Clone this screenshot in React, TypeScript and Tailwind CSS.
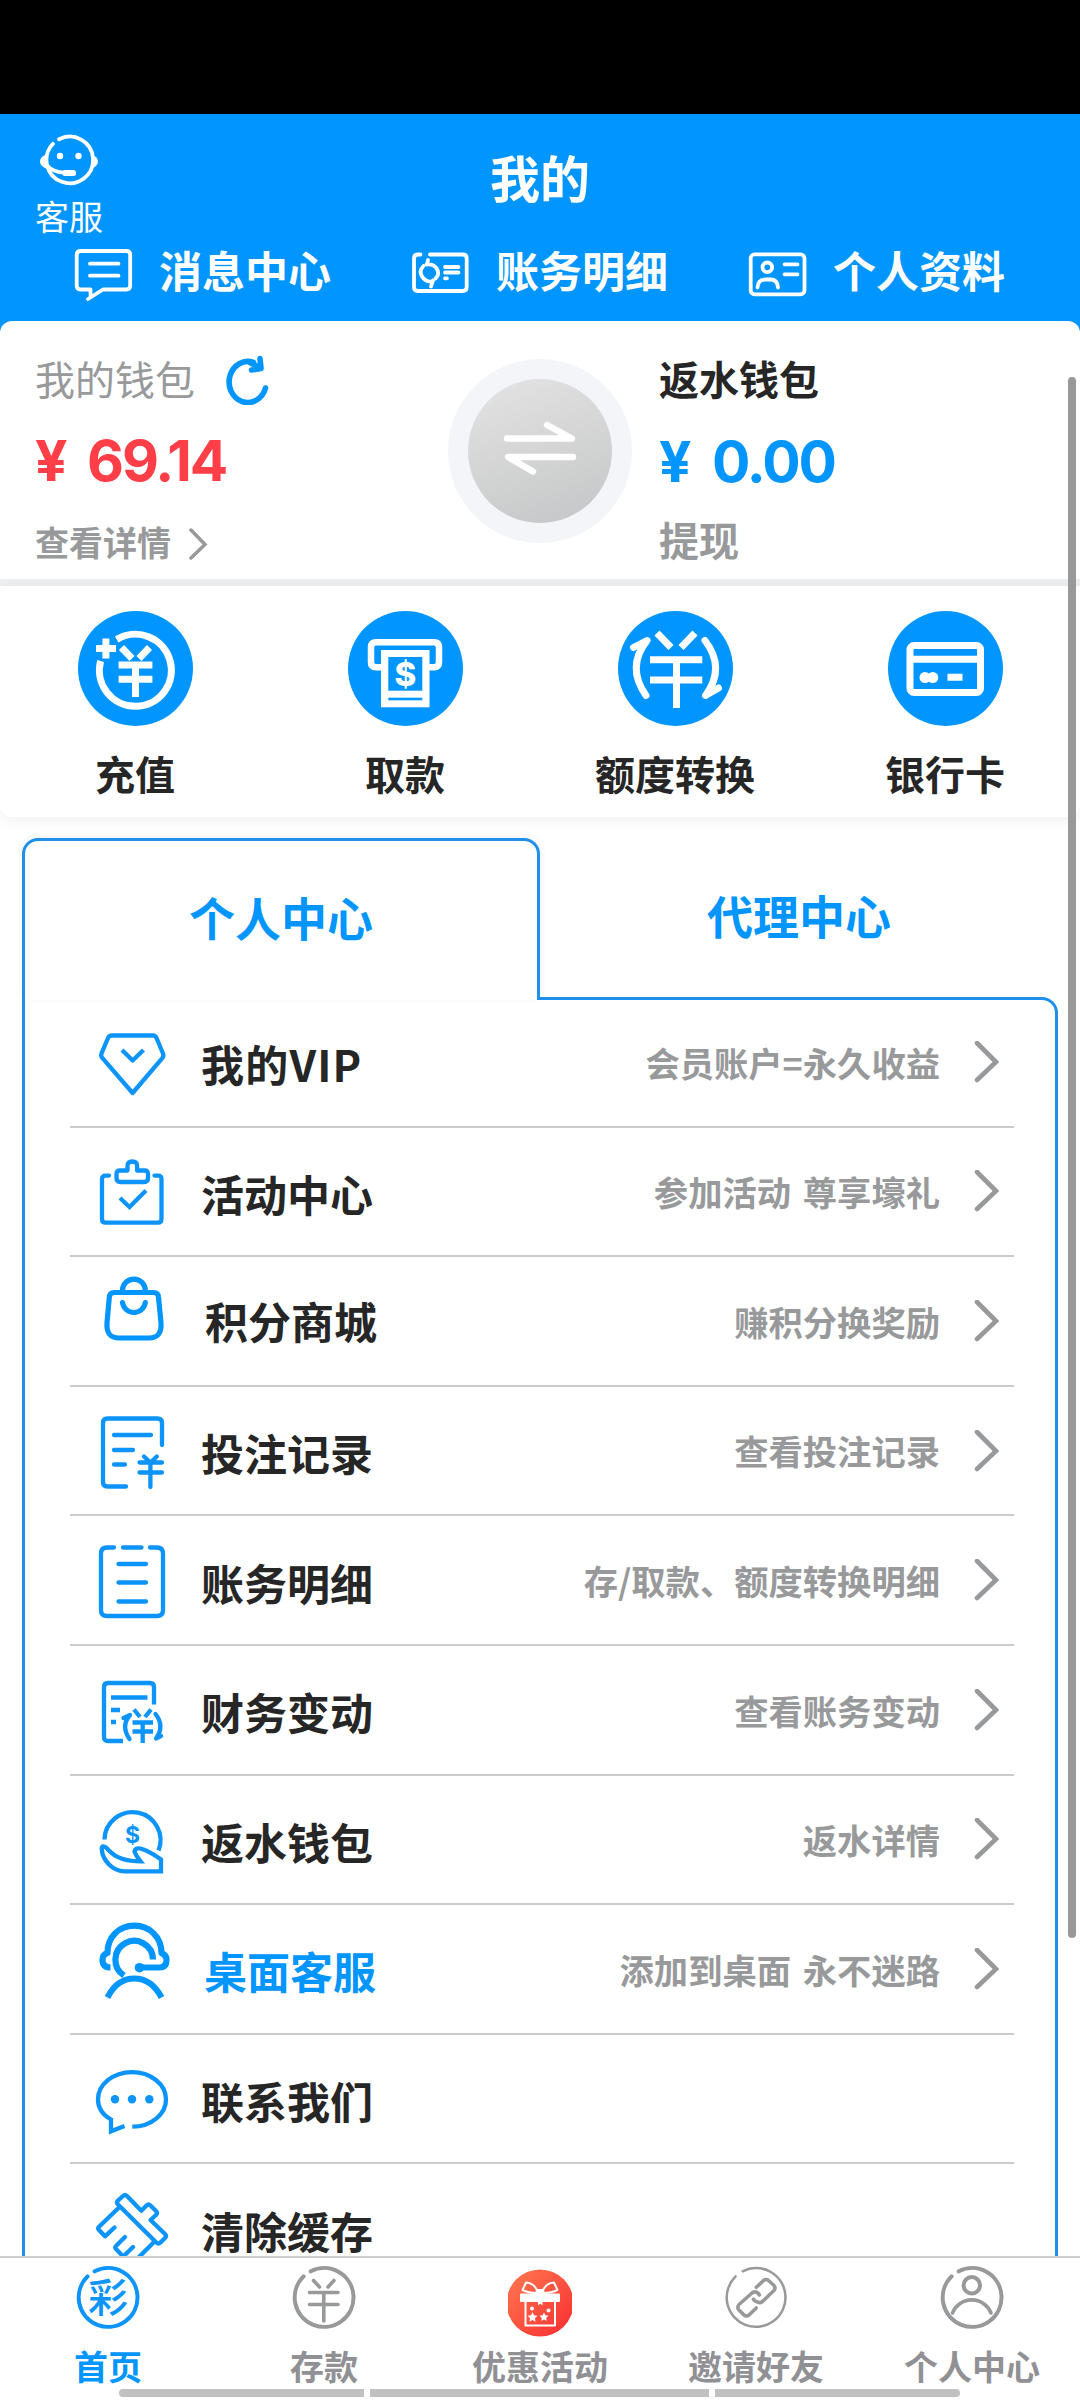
import type { ReactNode } from 'react';

const BLUE = '#0095ff';
const GRAY = '#98999b';

type IconProps = { children: ReactNode; color?: string; width?: number };

// Иконки меню — общий холст 80x100
function MenuIcon({ children, color = '#0d94fb', width = 4.3 }: IconProps) {
  return (
    <svg
      className="h-[100px] w-20 shrink-0"
      viewBox="0 0 80 100"
      fill="none"
      stroke={color}
      strokeWidth={width}
      strokeLinecap="round"
      strokeLinejoin="round"
    >
      {children}
    </svg>
  );
}

function HeadIcon({ children, viewBox }: { children: ReactNode; viewBox: string }) {
  return (
    <svg
      className="h-[60px] w-16 shrink-0"
      viewBox={viewBox}
      fill="none"
      stroke="#fff"
      strokeWidth="3.8"
      strokeLinecap="round"
      strokeLinejoin="round"
    >
      {children}
    </svg>
  );
}

function ActionIcon({ children }: { children: ReactNode }) {
  return (
    <svg className="h-[115px] w-[115px]" viewBox="0 0 115 115" fill="none" stroke="#fff" strokeWidth="7">
      <circle cx="57.5" cy="57.5" r="57.5" fill={BLUE} stroke="none" />
      {children}
    </svg>
  );
}

function TabIcon({ children, color = GRAY, ring = 4 }: { children: ReactNode; color?: string; ring?: number }) {
  return (
    <svg
      className="h-[76px] w-16"
      viewBox="0 0 64 76"
      fill="none"
      stroke={color}
      strokeWidth="3.6"
      strokeLinecap="round"
      strokeLinejoin="round"
    >
      {ring > 0 && <path d="M18.7 6.3A29.4 29.4 0 1 1 11.6 11.4" strokeWidth={ring} />}
      {children}
    </svg>
  );
}

const NAV = [
  {
    label: '消息中心',
    icon: (
      <HeadIcon viewBox="0 0 64 60">
        <path d="M18.5 49V43.5H8.7q-4 0-4-4V9q0-4 4-4H54.2q4 0 4 4V39.5q0 4-4 4H31L16 53" />
        <path d="M18 17.7H46.5M18 29.7H46.5" />
      </HeadIcon>
    ),
  },
  {
    label: '账务明细',
    icon: (
      <HeadIcon viewBox="-1 -3 64 60">
        <path d="M10.5 5.5H8q-4 0-4 4V38q0 4 4 4H52.7q4 0 4-4V9.5q0-4-4-4H20" />
        <path d="M13.5 17Q8.500 22 12 27.500T21.500 32.500M23 31.500L21 37.500M18 11L17 15.500M16.500 15.500Q24 14.500 27 20T25.500 29.500" />
        <path d="M35 18H48.5M35 23.5H48.5M35 29.3H37" />
      </HeadIcon>
    ),
  },
  {
    label: '个人资料',
    icon: (
      <HeadIcon viewBox="0 -3 64 60">
        <rect x="4.7" y="5.3" width="53.8" height="40" rx="4" />
        <circle cx="21.3" cy="18.3" r="4.8" />
        <path d="M11.5 38.5Q12 30.5 19 30.5H24.5Q31.5 30.5 32 38.5M38.5 15.3H51.5M38.5 25.3H51.5" />
      </HeadIcon>
    ),
  },
];

const ACTIONS = [
  {
    label: '充值',
    icon: (
      <ActionIcon>
        <path d="M38.7 28.5A36 36 0 1 1 22.6 50" />
        <path d="M27.9 27.5V47.5M18 37.5H38M43.5 36.5L54 47.5M71.5 36.5L61 47.5M40.6 54H74.4M40.6 68.3H74.4M57.5 54V86" />
      </ActionIcon>
    ),
  },
  {
    label: '取款',
    icon: (
      <ActionIcon>
        <path d="M36 56.3H28Q23 56.3 23 51.3V36.3Q23 31.3 28 31.3H86Q91 31.3 91 36.3V51.3Q91 56.3 86 56.3H79" strokeWidth="6.5" />
        <g stroke="none">
          <rect x="33" y="39" width="48.5" height="57.3" fill="#fff" />
          <rect x="40.3" y="46" width="34" height="33.7" fill={BLUE} />
          <rect x="40.3" y="86.7" width="34" height="2.6" fill={BLUE} />
          <text x="57.5" y="74.5" textAnchor="middle" fill="#fff" fontFamily="Inter, sans-serif" fontWeight="800" fontSize="33">$</text>
        </g>
      </ActionIcon>
    ),
  },
  {
    label: '额度转换',
    icon: (
      <ActionIcon>
        <path d="M39 22L53 36.5M77 22L63 36.5M32 48.7H84.3M32 69H84.3M58.5 48.7V97" />
        <path d="M28 84.5Q8 56 29 29.5L15.5 36.5M87 29.5Q108 57 87.5 84.5L100.5 77" strokeLinecap="round" strokeLinejoin="round" />
      </ActionIcon>
    ),
  },
  {
    label: '银行卡',
    icon: (
      <ActionIcon>
        <rect x="22" y="34.5" width="70.5" height="47" rx="4" />
        <path d="M22 48.3H92.5M59.5 66.3H74.5" />
        <g fill="#fff" stroke="none">
          <circle cx="37" cy="66.5" r="5.5" />
          <circle cx="44.8" cy="66.5" r="5.5" />
        </g>
      </ActionIcon>
    ),
  },
];

const TITLE = 'mt-1 text-[#262626]';

const MENU: { label: string; hint?: string; icon: ReactNode; title?: string }[] = [
  {
    label: '我的VIP',
    hint: '会员账户=永久收益',
    title: 'mt-1 tracking-[1.2px] text-[#262626]',
    icon: (
      <MenuIcon>
        <path d="M20 23.5H61Q63.5 23.5 64.5 26L71 41.5Q72 44 70.3 46.2L40.6 81L10.5 46.2Q8.5 44 9.5 41.5L16 26Q17 23.5 20 23.5Z" />
        <path d="M30 38l10.6 10.500L51.500 38" strokeLinecap="butt" />
      </MenuIcon>
    ),
  },
  {
    label: '活动中心',
    hint: '参加活动 尊享壕礼',
    icon: (
      <MenuIcon>
        <path d="M17 34.6H13.5Q10 34.6 10 38V78Q10 81.6 13.5 81.6H66Q69.5 81.6 69.5 78V38Q69.5 34.6 66 34.6H62.5" />
        <path d="M28 29.5h7.5v-4.500q0-4.500 4.800-4.500t4.800 4.500v4.500H52.500q3.500 0 3.500 3.500v4q0 4-4 4H28.500q-4 0-4-4v-4q0-3.500 3.500-3.500z" />
        <path d="M28 57L37.500 66 54 49.500" strokeLinecap="butt" strokeLinejoin="miter" />
      </MenuIcon>
    ),
  },
  {
    label: '积分商城',
    hint: '赚积分换奖励',
    title: '-mt-px ml-1 text-[#262626]',
    icon: (
      <MenuIcon width={5.2} color={BLUE}>
        <path d="M30.500 21V19.500A11.400 11.400 0 0 1 53.300 19.500V21" />
        <path d="M22.500 21.500H61.500Q66.200 21.500 66.500 26L69 52Q70 67 57 67H27Q14 67 15 52L17.300 26Q17.700 21.500 22.500 21.500Z" />
        <path d="M30.500 31.500A11.500 11.500 0 0 0 53.300 31.500" />
      </MenuIcon>
    ),
  },
  {
    label: '投注记录',
    hint: '查看投注记录',
    icon: (
      <MenuIcon>
        <path d="M70 44V22Q70 17.500 65.500 17.500H15.500Q11 17.500 11 22V81Q11 85.500 15.500 85.500H34" />
        <path d="M22 34H59M22 49H41M22 63.500H33M52 55.500l6.400 6 6.400-6M47.500 61.500H70M47.500 71.500H70M58.400 61.500V86" />
      </MenuIcon>
    ),
  },
  {
    label: '账务明细',
    hint: '存/取款、额度转换明细',
    icon: (
      <MenuIcon>
        <path d="M22 17.500H15Q9 17.500 9 23.500V80Q9 86 15 86H65Q71 86 71 80V23.500Q71 17.500 65 17.500H58M31 17.500H49.500" />
        <path d="M26.500 34H54M26.500 52.500H54M26.500 71.500H54" />
      </MenuIcon>
    ),
  },
  {
    label: '财务变动',
    hint: '查看账务变动',
    icon: (
      <MenuIcon>
        <path d="M62 44.500V27Q62 23 58 23H16Q12 23 12 27V77Q12 81 16 81H31M19 37.500H55.500M19 50H28M19 62H24" strokeLinecap="butt" />
        <path d="M42 49.500L48 57M59 49.500L53 57M40.500 62.500H61M40.500 71.500H61M50.700 62.500V83" strokeLinecap="butt" />
        <path d="M37.500 79Q28.500 66 38 55L31.500 58M63.500 54Q73 66 64 78.500L69 76" />
      </MenuIcon>
    ),
  },
  {
    label: '返水钱包',
    hint: '返水详情',
    icon: (
      <MenuIcon>
        <path d="M12.500 50.500A28 28 0 1 1 66.500 61.500" strokeLinecap="butt" />
        <path d="M9.700 60Q10 55.500 14 58.500C20 65 27 72.500 48.500 72.300Q44 67 42.500 62.500Q43 58.500 48.500 59.500Q58 62.500 69 70.500V82.300H33C20 82 10.500 71 9.700 60Z" strokeLinejoin="miter" />
        <text x="40.500" y="54" textAnchor="middle" fill="#0d94fb" stroke="none" fontFamily="Inter, sans-serif" fontWeight="700" fontSize="23">$</text>
      </MenuIcon>
    ),
  },
  {
    label: '桌面客服',
    hint: '添加到桌面 永不迷路',
    title: 'mt-1 ml-[3px] text-[#0095ff]',
    icon: (
      <MenuIcon width={6.2} color={BLUE}>
        <g strokeLinecap="butt">
          <path d="M18.500 48.500Q10.500 48.500 10.500 41Q10.500 35.500 15.500 34C15.300 18 27 6.700 42.300 6.700S69.500 18 69.500 34Q74.500 36 74.500 41Q74.500 48.500 67.500 48.500H47" />
          <path d="M61 40.500A18.800 18.800 0 1 0 32 56.500" />
          <path d="M15.500 78.500Q25 59.500 42.300 59.500T69.500 78.500" />
        </g>
        <circle cx="47.500" cy="48.700" r="4.800" fill={BLUE} stroke="none" />
      </MenuIcon>
    ),
  },
  {
    label: '联系我们',
    icon: (
      <MenuIcon>
        <path d="M40.300 77.700A34 27.300 0 1 0 6 50.500C6 59 11 66 19 70.500V82.300L32.500 77" strokeLinecap="butt" strokeLinejoin="miter" />
        <g fill="#0d94fb" stroke="none">
          <circle cx="23" cy="50.300" r="4.200" />
          <circle cx="40" cy="50.300" r="4.200" />
          <circle cx="57.300" cy="50.300" r="4.200" />
        </g>
      </MenuIcon>
    ),
  },
  {
    label: '清除缓存',
    icon: (
      <MenuIcon>
        <path d="M31 18Q33 16 35 18L49.300 32.800 54.500 27.500Q56.500 25.500 58.500 27.500L64 33Q66 35 64 37L58.500 42 73 56Q75 58 73 60L68.500 64.500Q66.300 66.500 64.300 64.500L26 26.500Q24 24.500 26 22.500Z" />
        <path d="M27 29.500L6.800 49Q5.500 50.500 7 52L13 58.300 22.500 49.500M33 59L24 68Q22.500 69.500 24 71L31.300 78.500 41 69M61 65L47 79" />
      </MenuIcon>
    ),
  },
];

const TABS = [
  {
    label: '首页',
    active: true,
    icon: (
      <TabIcon color="#0d94fb">
        <text x="32" y="47" textAnchor="middle" fill="#0d94fb" stroke="none" fontFamily="'Noto Sans CJK SC', sans-serif" fontWeight="500" fontSize="40">彩</text>
      </TabIcon>
    ),
  },
  {
    label: '存款',
    icon: (
      <TabIcon>
        <path d="M21.500 15.500L27.500 22M42 15.500L36 22M17.500 27.500H46M17.500 39.500H46M31.800 27.500V56" />
      </TabIcon>
    ),
  },
  {
    label: '优惠活动',
    icon: (
      <TabIcon ring={0}>
        <defs>
          <linearGradient id="giftGrad" x1="0" y1="0" x2="1" y2="1">
            <stop offset="0%" stopColor="#ff7a50" />
            <stop offset="100%" stopColor="#f92c31" />
          </linearGradient>
        </defs>
        <circle cx="32" cy="38" r="33.500" fill="url(#giftGrad)" stroke="none" />
        <g stroke="#fff" strokeWidth="2">
          <path d="M29 28Q20 28 14.500 25L18 17.500Q25 17.500 29 25M35 28Q44 28 49.500 25L46 17.500Q39 17.500 35 25" />
          <rect x="28.500" y="25" width="7" height="5" rx="2" fill="#fff" />
          <rect x="13" y="29.500" width="38" height="6.500" fill="#fff" />
          <path d="M17.500 36V60.500H47V36" />
        </g>
        <g fill="#fff" stroke="none">
          <path d="M30 36h4.500v4.500l-2.300-2-2.200 2z" />
          <path d="M24.500 47l1.500 3.300 3.500.5-2.600 2.400.7 3.600-3.100-1.800-3.100 1.800.7-3.600-2.600-2.400 3.500-.5z" />
          <path d="M36 47.500l1.400 2.800 3.100.5-2.300 2.200.6 3.100-2.800-1.500-2.800 1.500.6-3.100-2.300-2.200 3.100-.5z" />
          <circle cx="24" cy="43.500" r="2" />
          <circle cx="40.500" cy="45.500" r="2" />
        </g>
      </TabIcon>
    ),
  },
  {
    label: '邀请好友',
    icon: (
      <TabIcon ring={2.5}>
        <path d="M32.300 22.300L39.500 15.500Q42 13.500 44.500 15.500L50 20.500Q52 23 50 25.500L38.500 36.500Q36 38.500 33.500 37Q30 36 29.500 34.300" />
        <path d="M35.400 30Q32.500 25 28 28L15 39.500Q13 42 14.500 44.500L20 50Q22.500 52 25 50L32.300 43" />
      </TabIcon>
    ),
  },
  {
    label: '个人中心',
    icon: (
      <TabIcon>
        <circle cx="31.800" cy="20.300" r="8.200" strokeWidth="4" />
        <path d="M12.500 48A20.700 20.700 0 0 1 51 48" />
      </TabIcon>
    ),
  },
];

function Header() {
  return (
    <header className="h-[207px] shrink-0 bg-[#0095ff] text-white">
      <div className="grid h-[132px] grid-cols-[1fr_auto_1fr] items-start">
        <div className="flex w-[138px] flex-col items-center gap-3 pt-[19px]">
          <svg className="h-[54px] w-[60px]" viewBox="0 0 60 54" fill="none" stroke="#fff" strokeWidth="3.8" strokeLinecap="round">
            <path d="M20 6.3A23.3 23.3 0 1 1 14 10.8" />
            <path d="M7.500 32Q14 39.500 26 39.700" />
            <g fill="#fff" stroke="none">
              <path d="M7 21.500Q1 24 1 28.500T8 36ZM53 21.500Q59 24 59 28.500T52 36Z" />
              <circle cx="21" cy="23" r="3.200" />
              <circle cx="39.500" cy="23" r="3.200" />
              <rect x="23.500" y="37" width="13.500" height="6" rx="2.500" />
            </g>
          </svg>
          <span className="text-[34px] leading-none">客服</span>
        </div>
        <h1 className="mt-[37px] text-[50px] leading-none font-bold">我的</h1>
      </div>
      <nav className="flex items-start pl-[72px]">
        {NAV.map(n => (
          <div key={n.label} className="flex w-[337px] shrink-0 items-start gap-[23px]">
            {n.icon}
            <span className="mt-0.5 text-[43px] leading-none font-bold">{n.label}</span>
          </div>
        ))}
      </nav>
    </header>
  );
}

function Wallet() {
  return (
    <div className="bg-[#0095ff]">
      <section className="flex h-[258px] rounded-t-xl bg-white">
        <div className="w-[448px] pt-[37px] pl-[35px]">
          <div className="flex h-10 items-start gap-[31px] text-[40px] leading-none text-[#98999b]">
            我的钱包
            <svg className="-mt-[3px] h-[50px] w-11" viewBox="0 0 44 50" fill="none" stroke={BLUE} strokeWidth="5.6" strokeLinecap="round" strokeLinejoin="round">
              <path d="M27.500 7.500A18.600 20.500 0 1 0 39.500 33" />
              <path d="M34 3.500l1 10-9.500 1.500M24 7.500l9 5" />
            </svg>
          </div>
          <div className="mt-[33px] h-[60px] font-[Inter] text-[57px] leading-[60px] font-bold tracking-[-2px] text-[#ff3e48] [word-spacing:10px]">¥ 69.14</div>
          <div className="mt-[33px] flex items-center gap-[17px] text-[34px] leading-none font-bold text-[#98999b]">
            查看详情
            <svg className="mt-1 h-8 w-5" viewBox="0 0 20 32" fill="none" stroke={GRAY} strokeWidth="3.5" strokeLinecap="round">
              <path d="M3 2l14 14.500L3 30" />
            </svg>
          </div>
        </div>
        <div className="mt-[38px] flex h-[184px] w-[184px] shrink-0 items-center justify-center rounded-full bg-[#f4f5f8]">
          <div className="flex h-36 w-36 items-center justify-center rounded-full bg-linear-160 from-[#e4e4e4] to-[#c4c5c6]">
            <svg className="h-[60px] w-[76px]" viewBox="0 0 76 60" fill="none" stroke="#fff" strokeWidth="6.4" strokeLinecap="round" strokeLinejoin="round">
              <path d="M5 17.500H70L45 4" />
              <path d="M71 36H6L31 50.500" />
            </svg>
          </div>
        </div>
        <div className="pt-[37px] pl-[27px]">
          <div className="text-[40px] leading-none font-bold text-[#262626]">返水钱包</div>
          <div className="mt-[34px] h-[60px] font-[Inter] text-[57px] leading-[60px] font-bold tracking-[-2px] text-[#0095ff] [word-spacing:11px]">¥ 0.00</div>
          <div className="mt-[27px] text-[40px] leading-none font-bold text-[#98999b]">提现</div>
        </div>
      </section>
    </div>
  );
}

function Actions() {
  return (
    <section className="border-t-[7px] border-[#ebedee]">
      <div className="grid h-[231px] grid-cols-4 rounded-xl bg-white shadow-[0_4px_14px_rgba(0,0,0,0.06)]">
        {ACTIONS.map(a => (
          <div key={a.label} className="flex flex-col items-center pt-[25px]">
            {a.icon}
            <span className="mt-[27px] text-[40px] leading-none font-bold text-[#262626]">{a.label}</span>
          </div>
        ))}
      </div>
    </section>
  );
}

function Menu() {
  return (
    <section className="mx-[22px] mt-[21px]">
      <div className="flex text-[46px] leading-none font-bold text-[#0095ff]">
        <div className="relative z-10 h-[162px] w-[518px] rounded-t-2xl border-[3px] border-b-0 border-[#1e90ec] bg-white pt-[52px] text-center shadow-[0_-2px_8px_rgba(0,0,0,0.06)]">
          个人中心
        </div>
        <div className="h-[162px] flex-1 pt-[53px] text-center">代理中心</div>
      </div>
      <div className="-mt-[3px] rounded-tr-2xl border-[3px] border-b-0 border-[#1e90ec] bg-white pr-[41px] pl-[45px]">
        <div className="-mt-0.5">
          {MENU.map(m => (
            <div key={m.label} className="flex h-[129.6px] items-center border-b-2 border-[#cbcbcb] pl-[22px]">
              {m.icon}
              <span className="ml-[29px] flex-1">
                <span className={`block text-[43px] leading-none font-bold ${m.title ?? TITLE}`}>{m.label}</span>
              </span>
              {m.hint && (
                <>
                  <span className="text-[34.3px] leading-none font-bold text-[#98999b] [word-spacing:4px]">{m.hint}</span>
                  <svg className="mr-3.5 ml-8 h-[42px] w-7" viewBox="0 0 28 42" fill="none" stroke={GRAY} strokeWidth="4.6" strokeLinecap="round">
                    <path d="M5 2L24 21 5 39" />
                  </svg>
                </>
              )}
            </div>
          ))}
        </div>
      </div>
    </section>
  );
}

function BottomBar() {
  return (
    <footer className="relative z-20 h-36 shrink-0 border-t-2 border-[#cdcdcd] bg-white">
      <div className="grid grid-cols-5 pt-[7px]">
        {TABS.map(t => (
          <div key={t.label} className={`flex flex-col items-center text-[34px] leading-none font-bold ${t.active ? 'text-[#0095ff]' : 'text-[#919195]'}`}>
            {t.icon}
            <span className="mt-2">{t.label}</span>
          </div>
        ))}
      </div>
      <div className="absolute top-[131px] left-[119px] flex w-[841px] gap-1.5">
        <div className="h-2 flex-1 rounded-l-full bg-[#c1c1c1]" />
        <div className="h-2 w-[339px] bg-[#c1c1c1]" />
        <div className="h-2 flex-1 rounded-r-full bg-[#c1c1c1]" />
      </div>
    </footer>
  );
}

export default function App() {
  return (
    <div className="relative flex h-[2400px] w-[1080px] flex-col overflow-hidden bg-white font-['Noto_Sans_CJK_SC',sans-serif]">
      <div className="h-[114px] shrink-0 bg-black" />
      <Header />
      <main className="min-h-0 flex-1 overflow-hidden">
        <Wallet />
        <Actions />
        <Menu />
      </main>
      <BottomBar />
      {/* Полоса прокрутки */}
      <div className="absolute top-[377px] right-1 h-[1561px] w-2 rounded-full bg-[#999]" />
    </div>
  );
}
